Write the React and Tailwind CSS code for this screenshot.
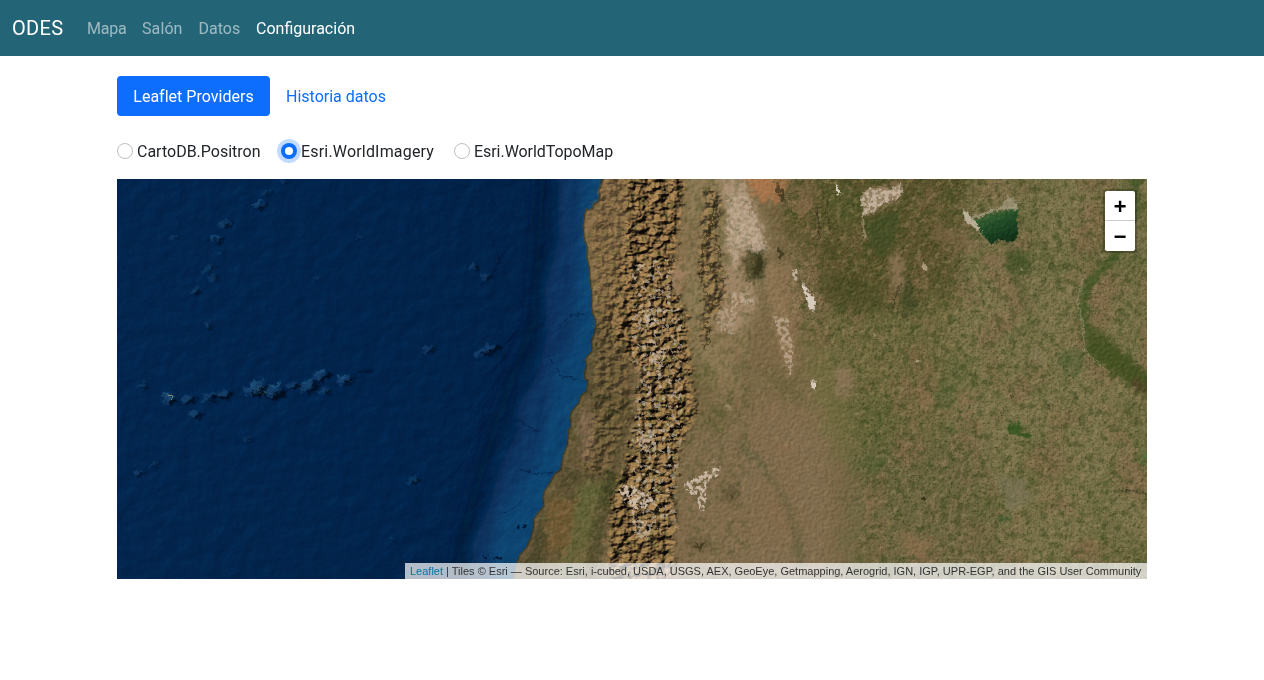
import React, { useState } from "react";

const COAST =
  "M368 -10 L362 18 L354 34 L358 50 L352 68 L340 74 L336 88 L324 92 L318 86 L312 108 L308 140 L310 175 L320 205 L319 235 L326 265 L329 310 L334 345 L333 385 L337 405 L346 425 L343 460 L333 484 L334 515 L322 530 L314 542 L318 560 L312 580 L313 600 L322 607 L318 635 L300 650 L295 672 L274 695 L268 712 L271 740 L263 756 L261 795 L247 830 L241 870 L222 885 L212 905 L192 935 L187 955 L190 980 L172 1002 L160 1018 L158 1050 L150 1078 L138 1105 L120 1125 L108 1150 L95 1215";

function Relief({ id, freq, scale, seed, kd = 0.72, octaves = 4, az = 225 }) {
  return (
    <filter id={id} x="0" y="0" width="100%" height="100%" colorInterpolationFilters="sRGB">
      <feTurbulence type="fractalNoise" baseFrequency={freq} numOctaves={octaves} seed={seed} />
      <feDiffuseLighting surfaceScale={scale} diffuseConstant={kd} lightingColor="#fff">
        <feDistantLight azimuth={az} elevation="45" />
      </feDiffuseLighting>
    </filter>
  );
}

function Speckle({ id, freq, seed, color, gain, offset }) {
  const [r, g, b] = color;
  return (
    <filter id={id} x="0" y="0" width="100%" height="100%" colorInterpolationFilters="sRGB">
      <feTurbulence type="fractalNoise" baseFrequency={freq} numOctaves="4" seed={seed} />
      <feColorMatrix
        type="matrix"
        values={`0 0 0 0 ${r} 0 0 0 0 ${g} 0 0 0 0 ${b} ${gain} 0 0 0 ${offset}`}
      />
    </filter>
  );
}

function Rough({ id, freq, scale, blur }) {
  return (
    <filter id={id} x="-30%" y="-30%" width="160%" height="160%" colorInterpolationFilters="sRGB">
      <feGaussianBlur in="SourceGraphic" stdDeviation={blur} result="soft" />
      <feTurbulence type="fractalNoise" baseFrequency={freq} numOctaves="4" seed="7" result="n" />
      <feDisplacementMap in="soft" in2="n" scale={scale} xChannelSelector="R" yChannelSelector="G" />
    </filter>
  );
}

/* Seamounts: x, y, half-width, half-height */
const SEAMOUNTS = [
  [502, 6, 12, 6], [450, 42, 14, 9], [428, 82, 20, 11], [328, 135, 22, 9], [302, 180, 16, 11],
  [175, 173, 12, 6], [313, 220, 7, 6], [278, 268, 21, 8], [294, 297, 16, 6], [240, 338, 18, 10],
  [275, 440, 8, 12], [80, 620, 12, 9], [160, 660, 20, 20], [215, 663, 20, 13], [237, 707, 15, 14],
  [285, 653, 26, 13], [325, 648, 20, 14], [425, 630, 38, 23], [478, 640, 26, 22], [533, 620, 16, 11],
  [580, 625, 26, 18], [615, 590, 28, 16], [628, 637, 14, 11], [690, 603, 24, 15], [1118, 514, 38, 14],
  [1075, 262, 12, 11], [1110, 295, 18, 9], [940, 512, 18, 9], [70, 882, 16, 9], [118, 857, 18, 6],
  [395, 782, 13, 6], [727, 172, 11, 5], [602, 296, 9, 5], [890, 903, 20, 8], [830, 1082, 7, 7],
];

function SatelliteImagery() {
  return (
    <svg className="block h-full w-full" viewBox="0 0 1030 400" aria-hidden="true">
      <defs>
        <Relief id="seaRelief" freq="0.06 0.065" scale={1.6} seed={4} octaves={4} kd={0.69} />
        <Relief id="landRelief" freq="0.3" scale={1.3} seed={11} />
        <Relief id="andesRelief" freq="0.11 0.15" scale={6.5} seed={23} octaves={4} kd={0.72} />
        <Speckle id="darkGreen" freq="0.13" seed={3} color={[0.24, 0.29, 0.12]} gain={5} offset={-2.45} />
        <Speckle id="lightTan" freq="0.16" seed={9} color={[0.62, 0.54, 0.38]} gain={5} offset={-2.6} />
        <Speckle id="broadGreen" freq="0.018" seed={31} color={[0.34, 0.37, 0.19]} gain={3.5} offset={-1.6} />
        <Speckle id="broadBrown" freq="0.022" seed={17} color={[0.52, 0.41, 0.29]} gain={3.5} offset={-1.65} />
        <Speckle id="grain" freq="0.5" seed={14} color={[0.14, 0.14, 0.06]} gain={4} offset={-2} />
        <Speckle id="snow" freq="0.2" seed={8} color={[0.83, 0.79, 0.73]} gain={9} offset={-5.1} />
        <Speckle id="drift" freq="0.25" seed={19} color={[0.84, 0.77, 0.7]} gain={7} offset={-2.9} />
        <Rough id="wide" freq="0.02" scale={80} blur={26} />
        <Rough id="mid" freq="0.05" scale={44} blur={8} />
        <Rough id="fine" freq="0.09" scale={18} blur={1.5} />
        <Rough id="jagged" freq="0.06" scale={30} blur={0.8} />
        <filter id="blur40" x="-50%" y="-20%" width="200%" height="140%">
          <feGaussianBlur stdDeviation="16" />
        </filter>
        <filter id="blur8" x="-50%" y="-50%" width="200%" height="200%">
          <feGaussianBlur stdDeviation="3" />
        </filter>
        <clipPath id="land">
          <path transform="scale(.33333)" d={`${COAST} L2200 1215 L2200 -10Z`} />
        </clipPath>
        <mask id="andes" maskUnits="userSpaceOnUse" x="0" y="0" width="1030" height="400">
          <g transform="translate(363 0) scale(.33333)" filter="url(#mid)">
            <path fill="#606060" d="M375 -30 L330 130 L350 400 L345 560 L340 700 L300 870 L380 900 L450 720 L460 -30Z" />
            <path fill="#999" d="M420 200 L470 180 L480 580 L400 500 L370 420Z" />
            <path fill="#e8e8e8" d="M450 -40 L620 -40 L595 150 L575 320 L620 400 L635 580 L650 700 L600 800 L585 950 L580 1230 L380 1230 L395 960 L440 840 L465 700 L480 580 L420 470 L430 300 L440 170Z" />
            <path fill="#999" d="M680 10 L735 60 L700 180 L735 290 L735 370 L690 420 L680 520 L655 450 L675 350 L650 260Z" />
          </g>
        </mask>
        <mask id="salt" maskUnits="userSpaceOnUse" x="0" y="0" width="1030" height="400">
          <g transform="translate(363 0) scale(.33333)" filter="url(#fine)" fill="#fff">
            <path d="M412 925 L455 918 L490 940 L520 955 L505 985 L465 990 L430 970Z" />
            <path d="M610 912 L645 900 L668 882 L722 862 L718 890 L680 905 L676 990 L662 1005 L652 955 L622 940Z" />
            <path d="M755 340 L810 345 L830 380 L780 370 L750 400Z M880 410 L925 420 L938 520 L933 595 L912 540Z" opacity=".6" />
            <path d="M740 60 L800 50 L865 210 L845 225 L780 210 L765 280 L740 200Z M715 380 L770 400 L760 470 L710 450Z" opacity=".45" />
            <path d="M1138 55 L1170 30 L1235 30 L1262 12 L1270 38 L1248 62 L1210 76 L1170 105 L1148 110Z" opacity=".8" />
            <path d="M470 760 L530 750 L525 800 L480 815Z M505 520 L560 510 L545 555 L510 565Z M485 385 L530 390 L525 440 L495 440Z M450 1020 L520 1030 L505 1080 L470 1070Z" opacity=".7" />
          </g>
        </mask>
        <mask id="pampas" maskUnits="userSpaceOnUse" x="0" y="0" width="1030" height="400">
          <g transform="translate(683 0) scale(.33333)" filter="url(#wide)">
            <path fill="#fff" d="M-60 -80 L1140 -80 L1140 1300 L190 1300 L170 1000 L150 740 L110 560 L-30 450Z" />
          </g>
        </mask>
        <linearGradient id="ocean" x1="0" y1="0" x2="1" y2="0">
          <stop offset="0" stopColor="#03264f" />
          <stop offset=".5" stopColor="#02244c" />
          <stop offset="1" stopColor="#032247" />
        </linearGradient>
        <linearGradient id="lagoon" x1="0" y1="0" x2=".5" y2="1">
          <stop offset="0" stopColor="#517240" />
          <stop offset=".5" stopColor="#244f28" />
          <stop offset="1" stopColor="#123319" />
        </linearGradient>
      </defs>

      {/* Ocean floor */}
      <rect width="520" height="400" fill="url(#ocean)" />
      <g transform="translate(363 0) scale(.33333)">
        <g filter="url(#blur40)">
          <path fill="#0a3462" d="M235 -60 L235 190 L195 330 L200 480 L165 600 L115 680 L110 760 L65 850 L25 990 L-20 1090 L-30 1260 L200 1260 L420 700 L420 -60Z" />
          <path fill="#134877" d="M320 -40 L295 180 L290 330 L280 500 L230 570 L210 700 L170 840 L60 1000 L10 1240 L180 1240 L400 650 L400 -40Z" opacity=".8" />
          <path fill="none" stroke="#011939" strokeWidth="40" d="M190 -40 L175 220 L160 430 L90 620 L10 860 L-50 1060 L-80 1240" opacity=".75" />
        </g>
        <g fill="none" stroke="#031a3c" filter="url(#fine)">
          <path strokeWidth="3" opacity=".75" d="M230 450 L270 410 L310 405 M205 535 L235 565 L240 590 L310 605 M120 870 L160 885 L215 880 M0 600 L70 540 L160 390 M-20 720 L70 610 L140 510 M10 780 L100 680 L110 640 M-130 930 L-65 870 L0 780" />
          <path strokeWidth="2.5" opacity=".75" d="M0 320 L50 270 M-20 650 L40 580 L120 465 M20 690 L85 600 M105 720 L180 760 M60 1010 L130 970 M20 30 L60 110 M30 160 L90 330 L140 390 M-40 700 L50 560 M-60 760 L20 650 L60 590 M-40 800 L40 700 M-80 1040 L-20 950 M-100 1100 L-50 1020 M60 560 L150 430 M80 600 L140 530" />
        </g>
        <path filter="url(#fine)" fill="#031631" d="M110 1035 L120 1043 L112 1048Z M130 1038 L138 1042 L132 1048Z M5 1132 L25 1130 L20 1136Z M35 1136 L60 1135 L75 1140 L50 1141Z" />
      </g>
      <rect width="520" height="400" filter="url(#seaRelief)" className="opacity-55 mix-blend-soft-light" />
      <g transform="scale(.33333)">
        <g filter="url(#jagged)">
          {SEAMOUNTS.map(([x, y, w, h]) => (
            <g key={`${x}-${y}`} transform={`translate(${x} ${y}) rotate(-28)`} filter="url(#blur8)">
              <ellipse cx={-w * 0.35} cy={-h * 0.5} rx={w * 0.95} ry={h * 0.75} fill="#15436e" opacity=".8" />
              <ellipse cx={w * 0.2} cy={h * 0.5} rx={w * 0.75} ry={h * 0.55} fill="#010b1e" />
            </g>
          ))}
          <path fill="none" stroke="#010f26" strokeWidth="6" opacity=".85" d="M410 645 L470 658 L500 638 L545 618 M575 642 L600 608 L640 588 M265 658 L330 654 M680 614 L715 597" />
          <path fill="none" stroke="#1e527c" strokeWidth="7" opacity=".8" d="M385 625 L430 608 M455 628 L490 612 M555 612 L588 606 M595 585 L620 572 M145 640 L155 660 M285 178 L300 172 M405 78 L430 65 M665 600 L690 592" />
        </g>
        <g filter="url(#fine)">
          <path fill="none" stroke="#8eaaa4" strokeWidth="2.5" strokeDasharray="3 4" d="M405 625 L440 625 L442 645 L412 642 L420 632 L435 636 M460 640 L475 652 M685 602 L700 608" opacity=".65" />
          <path fill="none" stroke="#b6ac80" strokeWidth="3" d="M150 648 L166 650 L166 660" opacity=".8" />
          <path fill="none" stroke="#01132e" strokeWidth="4" d="M700 592 L725 578 L770 576 M1090 525 L1160 505 L1200 455 M1090 318 L1125 285 L1165 215" opacity=".7" />
        </g>
      </g>

      {/* Land */}
      <g transform="translate(363 0)">
        <g clipPath="url(#land)">
          <rect width="680" height="400" fill="#786746" />
          <g transform="scale(.33333)" filter="url(#wide)">
            <path fill="#8d724e" d="M300 -60 L600 -60 L600 300 L490 620 L320 520Z" />
            <path fill="#5e5134" d="M340 380 L430 470 L480 600 L450 800 L420 950 L170 1200 L100 1200 L260 780Z" />
            <path fill="#7f6b4d" d="M640 740 L1040 640 L1060 1260 L560 1260Z" />
            <path fill="#8b7955" d="M600 -60 L800 -60 L860 200 L740 700 L620 500Z" />
            <path fill="#5a532c" d="M840 60 L1000 250 L1100 420 L1400 420 L1500 -80 L1040 -80 L900 110Z" />
            <path fill="#716a40" d="M960 420 L1500 350 L1540 900 L1120 900 L1000 700Z" />
            <path fill="#7c744c" d="M1500 -60 L2100 -60 L2100 1260 L1300 1260 L1400 600Z" />
            <path fill="#706844" d="M1130 800 L1500 760 L1600 1260 L1080 1260Z" />
          </g>
          <g transform="scale(.33333)" filter="url(#mid)">
            <path fill="#b1997e" d="M715 -20 L790 -20 L825 110 L865 210 L850 230 L790 220 L760 290 L735 190 L750 120Z" />
            <path fill="#a9754c" d="M785 -20 L940 -20 L910 40 L880 75 L825 50Z" />
            <path fill="#a88d70" d="M730 270 L790 230 L830 370 L780 460 L705 450Z" opacity=".8" />
            <path fill="#9e7e60" d="M580 250 L625 270 L600 340 L570 320Z" />
            <path fill="#9b7d5b" d="M850 260 L930 250 L960 400 L935 590 L895 520 L870 380Z" opacity=".6" />
            <path fill="#987b60" d="M1150 40 L1265 0 L1255 60 L1185 105Z" opacity=".7" />
            <path fill="#866c54" d="M300 700 L345 700 L340 850 L300 850Z" opacity=".8" />
            <path fill="#626137" d="M300 910 L400 900 L360 1060 L310 1220 L235 1220Z" />
            <path fill="#3d4022" d="M385 870 L425 900 L375 1050 L350 1220 L305 1220 L340 1050Z" />
            <path fill="#775b34" d="M210 960 L290 960 L260 1120 L180 1120Z" opacity=".75" />
            <path fill="#464328" d="M330 640 L440 640 L440 700 L380 740Z M190 990 L165 1040 L160 1100 L110 1160 L190 1180 L200 1100Z M240 870 L310 880 L230 950Z" opacity=".7" />
            <path fill="#4c4a2c" d="M795 215 Q850 190 858 240 Q855 310 810 318 Q775 290 795 215Z" />
            <path fill="none" stroke="#5c5c3b" strokeWidth="20" d="M770 790 L840 850 L905 950 L950 1060 L960 1170" opacity=".75" />
            <path fill="#615c34" d="M630 550 L700 560 L720 640 L650 670Z M840 560 L960 600 L970 680 L900 650Z M650 740 L700 680 L780 640 L720 780Z" opacity=".4" />
            <path fill="#8f6f4f" d="M930 50 L1010 60 L1000 120 L950 110Z M860 680 L900 690 L880 710Z M880 790 L935 790 L930 830Z" opacity=".6" />
            <path fill="#53482e" d="M725 920 L780 920 L780 970 L730 970Z M620 1080 L690 1080 L680 1120 L630 1110Z" opacity=".55" />
          </g>
          <rect x="60" width="210" height="400" filter="url(#darkGreen)" opacity=".28" />
          <rect x="60" width="290" height="400" filter="url(#lightTan)" opacity=".25" />
          <rect x="60" width="290" height="400" filter="url(#broadBrown)" opacity=".3" />
        </g>
      </g>

      {/* Chaco and Pampas vegetation */}
      <g mask="url(#pampas)">
        <rect x="620" width="410" height="400" filter="url(#broadGreen)" opacity=".5" />
        <rect x="620" width="410" height="400" filter="url(#broadBrown)" opacity=".6" />
        <rect x="620" width="410" height="400" filter="url(#darkGreen)" opacity=".45" />
        <rect x="620" width="410" height="400" filter="url(#lightTan)" opacity=".38" />
        <rect x="620" width="410" height="400" filter="url(#grain)" opacity=".28" />
      </g>

      <g transform="translate(683 0) scale(.33333)">
        <g filter="url(#mid)">
          <path fill="#3e4c24" d="M190 130 L300 90 L290 190 L240 240 L200 190Z" opacity=".7" />
          <path fill="#415026" d="M620 215 L680 220 L695 280 L650 290 L620 260Z" opacity=".8" />
          <path fill="none" stroke="#47582b" strokeWidth="14" d="M650 300 L675 370 L690 450" opacity=".5" />
          <path fill="#394321" d="M330 260 L350 400 L315 405 L300 350Z" opacity=".7" />
          <path fill="#40451f" d="M70 260 L250 330 L250 400 L120 400 L60 340Z M20 170 L110 200 L90 250Z" opacity=".45" />
          <path fill="#86694b" d="M0 30 L60 20 L40 70 L0 110Z M380 120 L540 190 L520 230 L400 180Z M560 220 L610 230 L600 280 L540 250Z" opacity=".5" />
          <path fill="none" stroke="#455727" strokeWidth="24" d="M1005 -10 L1005 100 L945 235 L880 295 L852 340 L850 400 L865 470 L875 520 L940 565 L1050 640" />
          <path fill="#475223" d="M860 450 L910 470 L1060 590 L1060 670 L960 600 L870 535Z" />
          <path fill="#54452a" d="M985 600 L1020 605 L1050 640 L1010 630Z" />
          <path fill="#857050" d="M275 225 L305 220 L310 310 L290 345 L270 290Z" />
          <path fill="#8e775a" d="M105 555 L145 565 L165 600 L140 660 L110 640Z" opacity=".75" />
          <path fill="#38562a" d="M598 1005 L628 1008 L625 1028 L600 1028Z" />
          <path fill="#4d6832" d="M1015 820 L1060 800 L1060 870 L1020 850Z" opacity=".6" />
          <path fill="#485c2d" d="M400 620 L470 620 L460 685 L410 680Z M190 840 L270 830 L250 870 L200 870Z M445 740 L515 740 L510 765 L450 760Z M770 520 L850 510 L850 590 L790 580Z" opacity=".45" />
          <path fill="#8d704e" d="M360 640 L400 660 L385 720 L360 690Z M480 640 L505 650 L485 690Z M200 940 L225 950 L210 1040 L190 1000Z M300 1060 L400 1080 L370 1150 L300 1110Z M840 1080 L890 1090 L880 1120 L845 1110Z" opacity=".6" />
          <path fill="#847a61" d="M590 890 L670 900 L700 960 L620 1000Z M700 500 L730 530 L710 560Z" opacity=".5" />
        </g>
        <g filter="url(#fine)">
          <path fill="#35541f" d="M625 737 L660 727 L665 760 L695 766 L690 782 L645 765 L627 765Z" opacity=".9" />
          <path fill="url(#lagoon)" d="M524 124 L570 104 L625 94 L652 92 L652 180 L635 188 L600 184 L572 194 L560 180 L535 152Z" />
          <path fill="none" stroke="#a29b82" strokeWidth="7" d="M492 92 L496 118 L530 113 L575 96 L625 84 L648 86 M620 60 L640 68 L648 86" opacity=".9" />
          <path fill="#b9ae96" d="M490 86 L512 114 L535 140 L545 165 L525 148 L493 125Z" />
          <path fill="#a09678" d="M600 85 L625 50 L652 70 L652 92 L625 94Z" opacity=".75" />
          <path fill="none" stroke="#a39b7c" strokeWidth="2" d="M502 5 L505 95" opacity=".7" />
          <path fill="#a08c70" d="M180 50 L210 28 L275 30 L300 12 L310 35 L290 60 L250 75 L210 105 L190 110 L200 180 L190 175 L185 110 L195 75Z" opacity=".75" />
          <path fill="#d6cabb" d="M103 10 L113 16 L120 50 L110 42Z M6 311 L20 330 L30 348 L45 355 L44 398 L33 394 L22 365 L10 332Z M32 610 L48 606 L48 630 L35 628Z" />
          <path fill="#bcab90" d="M220 465 L228 468 L223 480Z M350 540 L360 545 L350 553Z M662 268 L670 272 L664 276Z M365 255 L385 262 L380 280 L368 272Z" opacity=".8" />
          <path fill="none" stroke="#928c6c" strokeWidth="4" d="M850 300 L832 370 L850 440 L852 510 L880 540 L925 580" opacity=".7" />
          <path fill="none" stroke="#31301c" strokeWidth="4" d="M305 310 L283 360 L278 390 M50 80 L60 175 M80 100 L92 155 M960 936 L1000 934 L1045 946" opacity=".7" />
          <path fill="#332f1a" d="M632 650 L642 655 L635 660Z M740 675 L752 678 L748 688Z M600 700 L608 705 L604 714Z M365 955 L378 960 L370 966Z M795 978 L802 982 L798 988Z" />
        </g>
      </g>

      {/* Andes and coastal ranges */}
      <g mask="url(#andes)">
        <rect x="440" width="190" height="400" fill="#82653f" />
        <rect x="440" width="190" height="400" filter="url(#broadBrown)" opacity=".3" />
        <rect x="440" width="190" height="400" filter="url(#darkGreen)" opacity=".35" />
        <rect x="440" width="190" height="400" filter="url(#andesRelief)" className="mix-blend-overlay" />
        <rect x="515" y="80" width="50" height="270" filter="url(#snow)" opacity=".6" />
      </g>
      <g mask="url(#salt)">
        <rect x="480" width="340" height="400" filter="url(#drift)" opacity=".85" />
      </g>
      <g transform="translate(363 0)">
        <g clipPath="url(#land)" className="mix-blend-soft-light" opacity=".4">
          <rect width="680" height="400" filter="url(#landRelief)" />
        </g>
      </g>
      <g transform="translate(363 0)" clipPath="url(#land)">
        <g transform="scale(.33333)">
          <path fill="none" stroke="#20251a" strokeWidth="8" d={COAST} opacity=".7" />
          <g filter="url(#jagged)">
            <path fill="#d2c5b3" d="M935 262 L948 276 L952 302 L942 298Z" opacity=".9" />
            <path fill="#b5a286" d="M695 845 L705 846 L700 855Z M730 675 L760 685 L740 695Z" opacity=".6" />
            <path fill="#28270f" d="M833 222 L848 235 L843 275 L825 300 L830 250Z M650 1095 L675 1085 L660 1115Z M750 950 L765 955 L755 965Z M712 858 L722 864 L716 872Z M885 10 L905 25 L920 70 L895 50Z M895 200 L908 220 L905 250 L892 235Z" opacity=".6" />
            <path fill="none" stroke="#28250f" strokeWidth="5" opacity=".6" d="M690 35 L705 70 L685 170 L660 240 M705 170 L720 230 L695 260 L715 320 M658 270 L680 350 L665 370 M735 290 L715 370 L680 400 M680 430 L685 480 L670 510 M720 90 L708 140" />
          </g>
        </g>
      </g>
    </svg>
  );
}

const NAV = [
  { label: "Mapa", style: "w-[55px] text-white/55 tracking-[-0.2px]" },
  { label: "Salón", style: "w-[56.5px] text-white/55 tracking-[0.1px]" },
  { label: "Datos", style: "w-[57.5px] text-white/55" },
  { label: "Configuración", style: "w-[115px] text-white" },
];

const PROVIDERS = [
  { name: "CartoDB.Positron", style: "w-[124px]" },
  { name: "Esri.WorldImagery", style: "w-[133px] tracking-[0.18px]" },
  { name: "Esri.WorldTopoMap", style: "w-[140px] tracking-[-0.05px]" },
];

export default function App() {
  const [provider, setProvider] = useState("Esri.WorldImagery");
  return (
    <div className="min-h-[680px] bg-white font-[Roboto,sans-serif] text-base leading-6 text-[#212529]">
      <nav className="flex h-14 items-center bg-[#236477] px-3 pt-0.5">
        <a className="mr-4 w-[51px] whitespace-nowrap pb-0.5 text-xl tracking-[0.3px] text-white">ODES</a>
        {NAV.map((n) => (
          <a key={n.label} className={`whitespace-nowrap px-2 ${n.style}`}>
            {n.label}
          </a>
        ))}
      </nav>

      <main className="mx-auto w-[1030px] pt-5">
        <div className="flex">
          <button className="h-10 w-[153px] whitespace-nowrap rounded bg-[#0d6efd] pt-0.5 tracking-[0.02px] text-white">
            Leaflet Providers
          </button>
          <button className="h-10 w-[132px] whitespace-nowrap pt-0.5 text-[#0d6efd]">Historia datos</button>
        </div>

        <div className="mt-[23px] flex h-6 items-center">
          {PROVIDERS.map((p) => {
            const on = p.name === provider;
            return (
              <label key={p.name} className="mr-5 flex items-center">
                <input type="radio" className="sr-only" checked={on} onChange={() => setProvider(p.name)} />
                <span
                  className={
                    on
                      ? "-mr-1 flex size-4 items-center justify-center rounded-full bg-[#0d6efd] ring-4 ring-[#c2dbfe]"
                      : "size-4 rounded-full border border-[#bfbfbf] bg-white"
                  }
                >
                  {on && <span className="size-2 rounded-full bg-white" />}
                </span>
                <span className={`box-content whitespace-nowrap pt-px ${on ? "pl-2" : "pl-1"} ${p.style}`}>{p.name}</span>
              </label>
            );
          })}
        </div>

        <div className="relative mt-4 h-[400px] overflow-hidden bg-[#03264f]">
          <SatelliteImagery />
          <div className="absolute right-2.5 top-2.5 w-[34px] overflow-hidden rounded border-2 border-black/20 bg-white bg-clip-padding font-['Liberation_Mono',monospace] text-[22px] font-bold text-black">
            <button className="block h-[30px] w-[30px] border-b border-[#ccc] pt-[3px] text-center leading-[29px]">+</button>
            <button className="block h-[30px] w-[30px] pt-[3px] text-center leading-[29px]">−</button>
          </div>
          <div className="absolute bottom-0 right-0 h-4 w-[742px] whitespace-nowrap bg-white/70 px-[5px] font-['Liberation_Sans',sans-serif] text-[11px] leading-4 text-[#333]">
            <a className="text-[#0078a8]">Leaflet</a> | Tiles © Esri — Source: Esri, i-cubed, USDA, USGS, AEX, GeoEye,
            Getmapping, Aerogrid, IGN, IGP, UPR-EGP, and the GIS User Community
          </div>
        </div>
      </main>
    </div>
  );
}
